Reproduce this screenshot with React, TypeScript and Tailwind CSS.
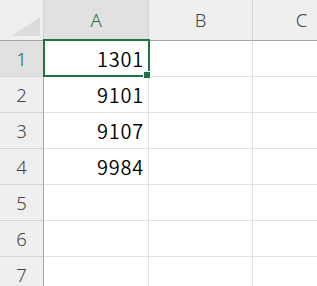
import React from "react";

const rows = [
  { n: 1, a: "1301" },
  { n: 2, a: "9101" },
  { n: 3, a: "9107" },
  { n: 4, a: "9984" },
  { n: 5, a: "" },
  { n: 6, a: "" },
  { n: 7, a: "" },
];

const uiFont = { fontFamily: '"Noto Sans", "Open Sans", sans-serif' };
const cellFont = { fontFamily: '"Noto Sans CJK JP", "Noto Sans", sans-serif' };

export default function App() {
  return (
    <div className="relative h-[286px] w-[317px] overflow-hidden bg-white">
      <div className="grid grid-cols-[44px_105px_104px_1fr] grid-rows-[41px_repeat(7,36px)]">
        {/* corner */}
        <div className="relative border-b border-r border-b-[#a6a6a6] border-r-[#d4d4d4] bg-[#efefef]">
          <div className="absolute bottom-[4px] right-[3px] h-0 w-0 border-b-[19px] border-l-[28px] border-b-[#dcdcdc] border-l-transparent" />
        </div>
        {/* column headers */}
        <div
          style={uiFont}
          className="flex items-center justify-center border-b-2 border-r border-b-[#217346] border-r-[#d4d4d4] bg-[#e1e1e1] text-[18.5px] font-light text-[#1c6b43]"
        >
          A
        </div>
        <div
          style={uiFont}
          className="flex items-center justify-center border-b border-r border-b-[#a6a6a6] border-r-[#d4d4d4] bg-[#efefef] text-[18.5px] font-light text-[#444]"
        >
          B
        </div>
        <div
          style={uiFont}
          className="flex items-center justify-center border-b border-b-[#a6a6a6] bg-[#efefef] pl-[33px] text-[18.5px] font-light text-[#444]"
        >
          C
        </div>

        {rows.map((r) => (
          <React.Fragment key={r.n}>
            <div
              style={uiFont}
              className={
                r.n === 1
                  ? "flex items-center justify-center border-b border-r border-b-[#d4d4d4] border-r-[#a6a6a6] bg-[#e1e1e1] text-[18.5px] font-light text-[#1c6b43]"
                  : "flex items-center justify-center border-b border-r border-b-[#d4d4d4] border-r-[#a6a6a6] bg-[#efefef] text-[18.5px] font-light text-[#444]"
              }
            >
              {r.n}
            </div>
            <div
              style={cellFont}
              className="flex items-center justify-end border-b border-r border-[#e1e1e1] pr-[4px] text-[20px] font-[350] tracking-[0.8px] text-black"
            >
              {r.a}
            </div>
            <div className="border-b border-r border-[#e1e1e1]" />
            <div className="border-b border-[#e1e1e1]" />
          </React.Fragment>
        ))}
      </div>

      {/* selection */}
      <div className="pointer-events-none absolute left-[43px] top-[39px] h-[38px] w-[107px] border-[2.5px] border-[#217346]" />
      <div className="absolute left-[143px] top-[71px] h-[8px] w-[8px] border border-white bg-[#217346]" />
    </div>
  );
}
